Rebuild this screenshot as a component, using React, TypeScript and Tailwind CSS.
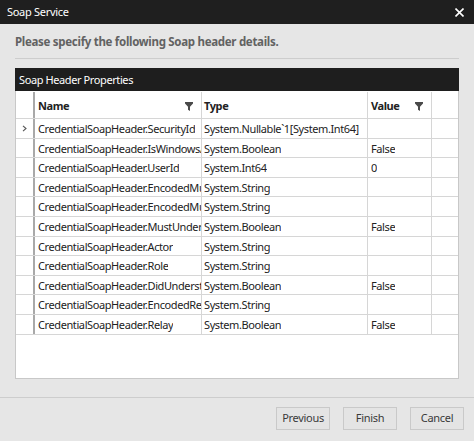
import React from 'react';

type Row = { name: string; type: string; value: string };

const rows: Row[] = [
  { name: 'CredentialSoapHeader.SecurityId', type: 'System.Nullable`1[System.Int64]', value: '' },
  { name: 'CredentialSoapHeader.IsWindowsAuthenticated', type: 'System.Boolean', value: 'False' },
  { name: 'CredentialSoapHeader.UserId', type: 'System.Int64', value: '0' },
  { name: 'CredentialSoapHeader.EncodedMustUnderstand', type: 'System.String', value: '' },
  { name: 'CredentialSoapHeader.EncodedMustUnderstand12', type: 'System.String', value: '' },
  { name: 'CredentialSoapHeader.MustUnderstand', type: 'System.Boolean', value: 'False' },
  { name: 'CredentialSoapHeader.Actor', type: 'System.String', value: '' },
  { name: 'CredentialSoapHeader.Role', type: 'System.String', value: '' },
  { name: 'CredentialSoapHeader.DidUnderstand', type: 'System.Boolean', value: 'False' },
  { name: 'CredentialSoapHeader.EncodedRelay', type: 'System.String', value: '' },
  { name: 'CredentialSoapHeader.Relay', type: 'System.Boolean', value: 'False' },
];

function Funnel() {
  return (
    <svg width="8" height="9" viewBox="0 0 8 9" className="shrink-0">
      <path d="M0 0h8v1.6L5 4.8V9L3 7.8V4.8L0 1.6z" fill="#4a4a4a" />
    </svg>
  );
}

function Button({ children }: { children: React.ReactNode }) {
  return (
    <button className="w-[54px] h-[23px] border border-[#c9c9c9] bg-[#e4e4e4] text-[11px] tracking-[-0.3px] text-[#3a3a3a]">
      {children}
    </button>
  );
}

function Cell({ w, pl, children }: { w: string; pl: string; children: React.ReactNode }) {
  return (
    <div className={`${w} ${pl} shrink-0 border-r border-[#d6d6d6] flex items-center pt-[2px] min-w-0`}>
      <span className="block overflow-hidden whitespace-nowrap">{children}</span>
    </div>
  );
}

export default function App() {
  return (
    <div className="w-[474px] h-[441px] flex flex-col bg-[#e6e6e6] font-['Noto_Sans',sans-serif] overflow-hidden">
      <div className="h-[24px] shrink-0 bg-[#1f1f1f] flex items-center justify-between pl-[7px] pr-[10px] text-white text-[11px] tracking-[-0.3px]">
        <span>Soap Service</span>
        <svg width="9" height="9" viewBox="0 0 9 9">
          <path d="M0.5 0.5l8 8M8.5 0.5l-8 8" stroke="#fff" strokeWidth="1.6" />
        </svg>
      </div>

      <div className="flex flex-col px-[15px]">
        <div className="pt-[10px] h-[34px] text-[11.5px] tracking-[-0.3px] font-bold text-[#626262] leading-[16px]">
          Please specify the following Soap header details.
        </div>
        <div className="h-px bg-[#cdcdcd]" />
        <div className="mt-[9px] h-[23px] bg-[#1e1e1e] text-white text-[11px] tracking-[-0.4px] flex items-center pl-[4px] pt-[2px]">
          Soap Header Properties
        </div>
        <div className="h-[288px] bg-white border border-t-0 border-[#c8c8c8] pt-[1px] text-[11px] tracking-[-0.4px] text-[#222]">
          <div className="flex h-[27px] border-b border-[#d6d6d6]">
            <div className="w-[19px] shrink-0 border-r-2 border-[#a9a9a9]" />
            <div className="w-[167px] shrink-0 border-r border-[#d6d6d6] flex items-center justify-between pl-[3px] pr-[8px] pt-[2px] font-bold">
              <span>Name</span>
              <Funnel />
            </div>
            <div className="w-[166px] shrink-0 border-r border-[#d6d6d6] flex items-center pl-[2px] pt-[2px] font-bold">
              <span>Type</span>
            </div>
            <div className="w-[64px] shrink-0 border-r border-[#d6d6d6] flex items-center justify-between pl-[3px] pr-[8px] pt-[2px] font-bold">
              <span>Value</span>
              <Funnel />
            </div>
            <div className="flex-1" />
          </div>
          {rows.map((row, i) => (
            <div key={i} className="flex h-[19.6px] border-b border-[#d6d6d6]">
              <div className="w-[19px] shrink-0 border-r-2 border-[#a9a9a9] flex items-center justify-center">
                {i === 0 && (
                  <svg width="5" height="7" viewBox="0 0 5 7">
                    <path d="M1 0.8L4 3.5L1 6.2" fill="none" stroke="#555" strokeWidth="1.1" />
                  </svg>
                )}
              </div>
              <Cell w="w-[167px]" pl="pl-[3px]">{row.name}</Cell>
              <Cell w="w-[166px]" pl="pl-[2px]">{row.type}</Cell>
              <Cell w="w-[64px]" pl="pl-[3px]">{row.value}</Cell>
              <div className="flex-1" />
            </div>
          ))}
        </div>
      </div>

      <div className="mt-[18px] h-px bg-[#cdcdcd]" />
      <div className="flex justify-end gap-[13px] pr-[10px] pt-[9px]">
        <Button>Previous</Button>
        <Button>Finish</Button>
        <Button>Cancel</Button>
      </div>
    </div>
  );
}
